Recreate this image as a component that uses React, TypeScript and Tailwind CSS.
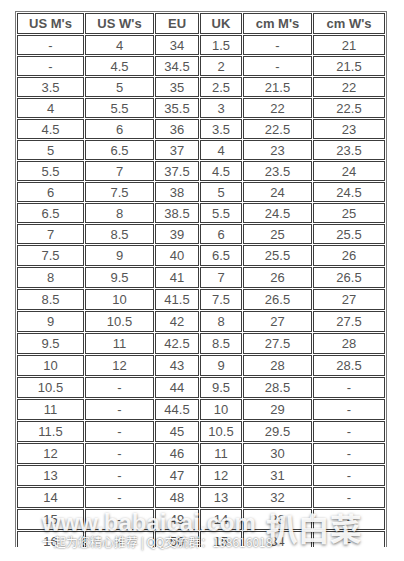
const headers = ["US M's", "US W's", 'EU', 'UK', "cm M's", "cm W's"];
const widths = ['w-[67px]', 'w-[69px]', 'w-[44px]', 'w-[42px]', 'w-[69px]', 'w-[72px]'];

const rows: string[][] = [
  ['-', '4', '34', '1.5', '-', '21'],
  ['-', '4.5', '34.5', '2', '-', '21.5'],
  ['3.5', '5', '35', '2.5', '21.5', '22'],
  ['4', '5.5', '35.5', '3', '22', '22.5'],
  ['4.5', '6', '36', '3.5', '22.5', '23'],
  ['5', '6.5', '37', '4', '23', '23.5'],
  ['5.5', '7', '37.5', '4.5', '23.5', '24'],
  ['6', '7.5', '38', '5', '24', '24.5'],
  ['6.5', '8', '38.5', '5.5', '24.5', '25'],
  ['7', '8.5', '39', '6', '25', '25.5'],
  ['7.5', '9', '40', '6.5', '25.5', '26'],
  ['8', '9.5', '41', '7', '26', '26.5'],
  ['8.5', '10', '41.5', '7.5', '26.5', '27'],
  ['9', '10.5', '42', '8', '27', '27.5'],
  ['9.5', '11', '42.5', '8.5', '27.5', '28'],
  ['10', '12', '43', '9', '28', '28.5'],
  ['10.5', '-', '44', '9.5', '28.5', '-'],
  ['11', '-', '44.5', '10', '29', '-'],
  ['11.5', '-', '45', '10.5', '29.5', '-'],
  ['12', '-', '46', '11', '30', '-'],
  ['13', '-', '47', '12', '31', '-'],
  ['14', '-', '48', '13', '32', '-'],
  ['15', '-', '49', '14', '33', '-'],
  ['16', '-', '50', '15', '34', '-'],
];

export default function App() {
  return (
    <div className="relative h-[561px] w-[404px] bg-white font-['Liberation_Sans',Arial,sans-serif]">
      {/* size chart, cropped at the bottom like the source image */}
      <div className="h-[547px] overflow-hidden pl-[15px] pt-[11px]">
        <table className="w-[372px] table-fixed border-separate border-spacing-[1px] border border-[#7a7a7a] text-[13px] text-[#555]">
          <thead>
            <tr className="h-[21px]">
              {headers.map((h, i) => (
                <th key={h} className={`${widths[i]} border border-[#3c3c3c] p-0 text-center font-bold leading-none`}>
                  {h}
                </th>
              ))}
            </tr>
          </thead>
          <tbody>
            {rows.map((row, r) => (
              <tr key={r} className={r < 10 ? 'h-[20px]' : 'h-[21px]'}>
                {row.map((cell, c) => (
                  <td key={c} className="border border-[#3c3c3c] p-0 text-center leading-none">
                    {cell}
                  </td>
                ))}
              </tr>
            ))}
          </tbody>
        </table>
      </div>

      {/* watermark overlay */}
      <div className="pointer-events-none absolute left-[42px] top-[511px] flex flex-col text-white/90 [text-shadow:0_1px_3px_rgba(0,0,0,0.55)]">
        <div className="flex items-start">
          <span className="text-[24px] font-bold leading-none">www.babaicai.com</span>
          <span className="ml-[10px] font-['Noto_Sans_CJK_SC',sans-serif] text-[32px] font-bold leading-none">扒白菜</span>
        </div>
        <span className="-mt-[7px] font-['Noto_Sans_CJK_SC',sans-serif] text-[12px] leading-none text-white [text-shadow:0_0_2px_rgba(0,0,0,0.8)]">
          一起为您精心推荐 | QQ交流群：138616018
        </span>
      </div>
    </div>
  );
}
